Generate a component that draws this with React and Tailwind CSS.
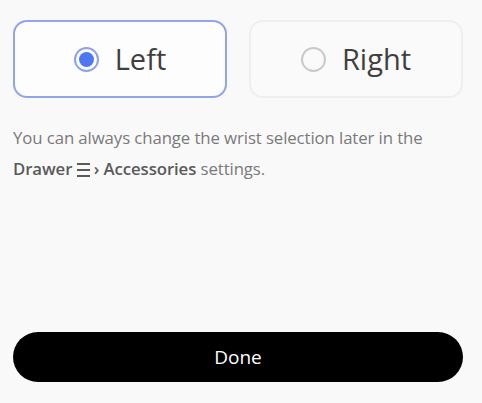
import { useState } from 'react';

const hands = ['Left', 'Right'];

export default function App() {
  const [wrist, setWrist] = useState('Left');

  return (
    <div className="w-[482px] h-[403px] bg-[#f9f9f9] flex flex-col pl-[13px] pr-[19px] pt-[20px] pb-[21px] font-['Open_Sans',sans-serif]">
      {/* Wrist choice */}
      <div className="grid grid-cols-2 gap-[22px]">
        {hands.map((hand) => {
          const active = wrist === hand;
          return (
            <button
              key={hand}
              onClick={() => setWrist(hand)}
              className={
                active
                  ? 'h-[78px] rounded-[14px] border-2 border-[#92a5e8] bg-[#fdfdfd] flex items-center justify-center gap-[16px]'
                  : 'h-[78px] rounded-[14px] border-2 border-[#efefef] bg-[#fafafa] flex items-center justify-center gap-[16px]'
              }
            >
              {active ? (
                <span className="w-[25px] h-[25px] rounded-full border-2 border-[#8ea1ea] flex items-center justify-center">
                  <span className="w-[15px] h-[15px] rounded-full bg-[#4d78f0]" />
                </span>
              ) : (
                <span className="w-[25px] h-[25px] rounded-full border-2 border-[#c9c9c9]" />
              )}
              <span className="text-[29px] leading-none text-[#3f3f3f] pb-[2px]">{hand}</span>
            </button>
          );
        })}
      </div>

      {/* Hint */}
      <p className="mt-[24px] text-[16.8px] leading-[31px] tracking-[-0.1px] text-[#7a7a7a]">
        You can always change the wrist selection later in the
        <br />
        <span className="font-semibold text-[#5a5a5a]">Drawer</span>{' '}
        <span className="inline-flex flex-col gap-[4px] align-middle w-[13px] -mt-[2px]">
          <span className="h-[2px] bg-[#5a5a5a]" />
          <span className="h-[2px] bg-[#5a5a5a]" />
          <span className="h-[2px] bg-[#5a5a5a]" />
        </span>
        <span className="font-semibold text-[#5a5a5a]"> › Accessories</span> settings.
      </p>

      <div className="flex-1" />

      <button className="h-[50px] w-full rounded-full bg-black text-white text-[19px] flex items-center justify-center">
        Done
      </button>
    </div>
  );
}
